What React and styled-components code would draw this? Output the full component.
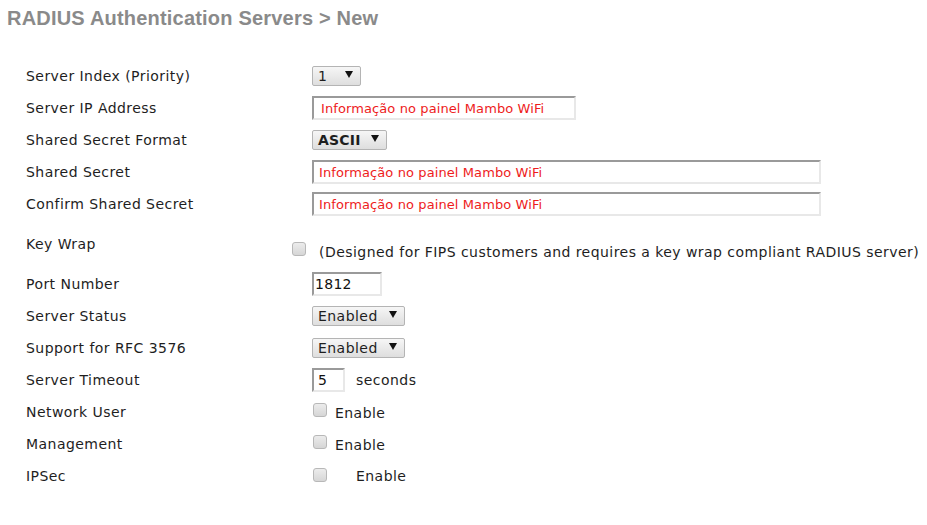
import React from "react";
import styled, { createGlobalStyle } from "styled-components";

const GlobalStyle = createGlobalStyle`
  body {
    margin: 0;
    background: #fff;
    font-family: "DejaVu Sans", Verdana, sans-serif;
  }
`;

const Page = styled.div`
  width: 927px;
  height: 525px;
  padding: 6px 0 0 7px;
  box-sizing: border-box;
`;

const Title = styled.h1`
  margin: 0;
  font-family: "Liberation Sans", Arial, sans-serif;
  font-size: 20px;
  font-weight: bold;
  letter-spacing: 0.2px;
  color: #8a8a8a;
  line-height: 24px;
`;

const Form = styled.div`
  margin-top: 30px;
  padding-left: 19px;
  display: flex;
  flex-direction: column;
`;

const Row = styled.div`
  display: grid;
  grid-template-columns: 286px 1fr;
  align-items: ${(p) => (p.$tall ? "start" : "center")};
  height: ${(p) => (p.$tall ? "48px" : "32px")};
`;

const Text = `
  font-size: 14px;
  letter-spacing: 0.45px;
  color: #1e1e1e;
`;

const Label = styled.div`
  ${Text}
  line-height: 16px;
  ${(p) => p.$tall && "margin-top: 16px;"}
`;

const Control = styled.div`
  display: flex;
  align-items: center;
  ${Text}
  ${(p) => p.$shift && `margin-left: ${p.$shift}px;`}
  ${(p) => p.$tall && "margin-top: 24px;"}
`;

const Select = styled.div`
  height: 20px;
  width: ${(p) => p.$w}px;
  box-sizing: border-box;
  border: 1px solid #b4b4b4;
  border-radius: 2px;
  background: linear-gradient(#f6f6f6, #dedede);
  display: flex;
  align-items: center;
  justify-content: space-between;
  padding: 0 7px 0 5px;
  font-weight: ${(p) => (p.$bold ? "bold" : "normal")};
  letter-spacing: ${(p) => (p.$bold ? "0.2px" : "0.45px")};
`;

const Arrow = styled.span`
  width: 0;
  height: 0;
  border-left: 4px solid transparent;
  border-right: 4px solid transparent;
  border-top: 7px solid #111;
  margin-top: -4px;
`;

const Input = styled.div`
  height: 24px;
  width: ${(p) => p.$w}px;
  box-sizing: border-box;
  border: 2px solid #e8e8e8;
  border-top-color: #9a9a9a;
  border-left-color: #9a9a9a;
  background: #fff;
  display: flex;
  align-items: center;
  padding-left: ${(p) => (p.$pad !== undefined ? p.$pad : 6)}px;
  color: ${(p) => (p.$red ? "#ee1c1c" : "#111")};
  font-size: ${(p) => (p.$red ? 13 : 14)}px;
  letter-spacing: ${(p) => (p.$red ? "0.1px" : "0.3px")};
`;

const Box = styled.span`
  flex: none;
  width: 14px;
  height: 14px;
  box-sizing: border-box;
  border: 1px solid #b8b8b8;
  border-radius: 3px;
  background: linear-gradient(#ececec, #d6d6d6);
  margin-left: ${(p) => p.$ml || 0}px;
  margin-right: ${(p) => p.$mr || 8}px;
  margin-top: ${(p) => p.$mt || 0}px;
`;

const Note = styled.span`
  margin-left: ${(p) => p.$ml || 0}px;
  margin-top: ${(p) => p.$mt || 0}px;
  line-height: 16px;
  white-space: nowrap;
`;

const PLACEHOLDER = "Informação no painel Mambo WiFi";

export default function App() {
  return (
    <Page>
      <GlobalStyle />
      <Title>RADIUS Authentication Servers &gt; New</Title>
      <Form>
        <Row>
          <Label>Server Index (Priority)</Label>
          <Control>
            <Select $w={49}>1<Arrow /></Select>
          </Control>
        </Row>
        <Row>
          <Label>Server IP Address</Label>
          <Control>
            <Input $w={264} $red $pad={7}>{PLACEHOLDER}</Input>
          </Control>
        </Row>
        <Row>
          <Label>Shared Secret Format</Label>
          <Control>
            <Select $w={75} $bold>ASCII<Arrow /></Select>
          </Control>
        </Row>
        <Row>
          <Label>Shared Secret</Label>
          <Control>
            <Input $w={509} $red $pad={5}>{PLACEHOLDER}</Input>
          </Control>
        </Row>
        <Row>
          <Label>Confirm Shared Secret</Label>
          <Control>
            <Input $w={509} $red $pad={5}>{PLACEHOLDER}</Input>
          </Control>
        </Row>
        <Row $tall>
          <Label $tall>Key Wrap</Label>
          <Control $tall $shift={-20}>
            <Box $mr={13} $mt={-6} />
            <Note>(Designed for FIPS customers and requires a key wrap compliant RADIUS server)</Note>
          </Control>
        </Row>
        <Row>
          <Label>Port Number</Label>
          <Control>
            <Input $w={70} $pad={1}>1812</Input>
          </Control>
        </Row>
        <Row>
          <Label>Server Status</Label>
          <Control>
            <Select $w={93}>Enabled<Arrow /></Select>
          </Control>
        </Row>
        <Row>
          <Label>Support for RFC 3576</Label>
          <Control>
            <Select $w={93}>Enabled<Arrow /></Select>
          </Control>
        </Row>
        <Row>
          <Label>Server Timeout</Label>
          <Control>
            <Input $w={33} $pad={4}>5</Input>
            <Note $ml={11}>seconds</Note>
          </Control>
        </Row>
        <Row>
          <Label>Network User</Label>
          <Control>
            <Box $ml={1} $mt={-4} />
            <Note $mt={2}>Enable</Note>
          </Control>
        </Row>
        <Row>
          <Label>Management</Label>
          <Control>
            <Box $ml={1} $mt={-4} />
            <Note $mt={2}>Enable</Note>
          </Control>
        </Row>
        <Row>
          <Label>IPSec</Label>
          <Control>
            <Box $ml={1} $mt={-2} />
            <Note $ml={21}>Enable</Note>
          </Control>
        </Row>
      </Form>
    </Page>
  );
}
